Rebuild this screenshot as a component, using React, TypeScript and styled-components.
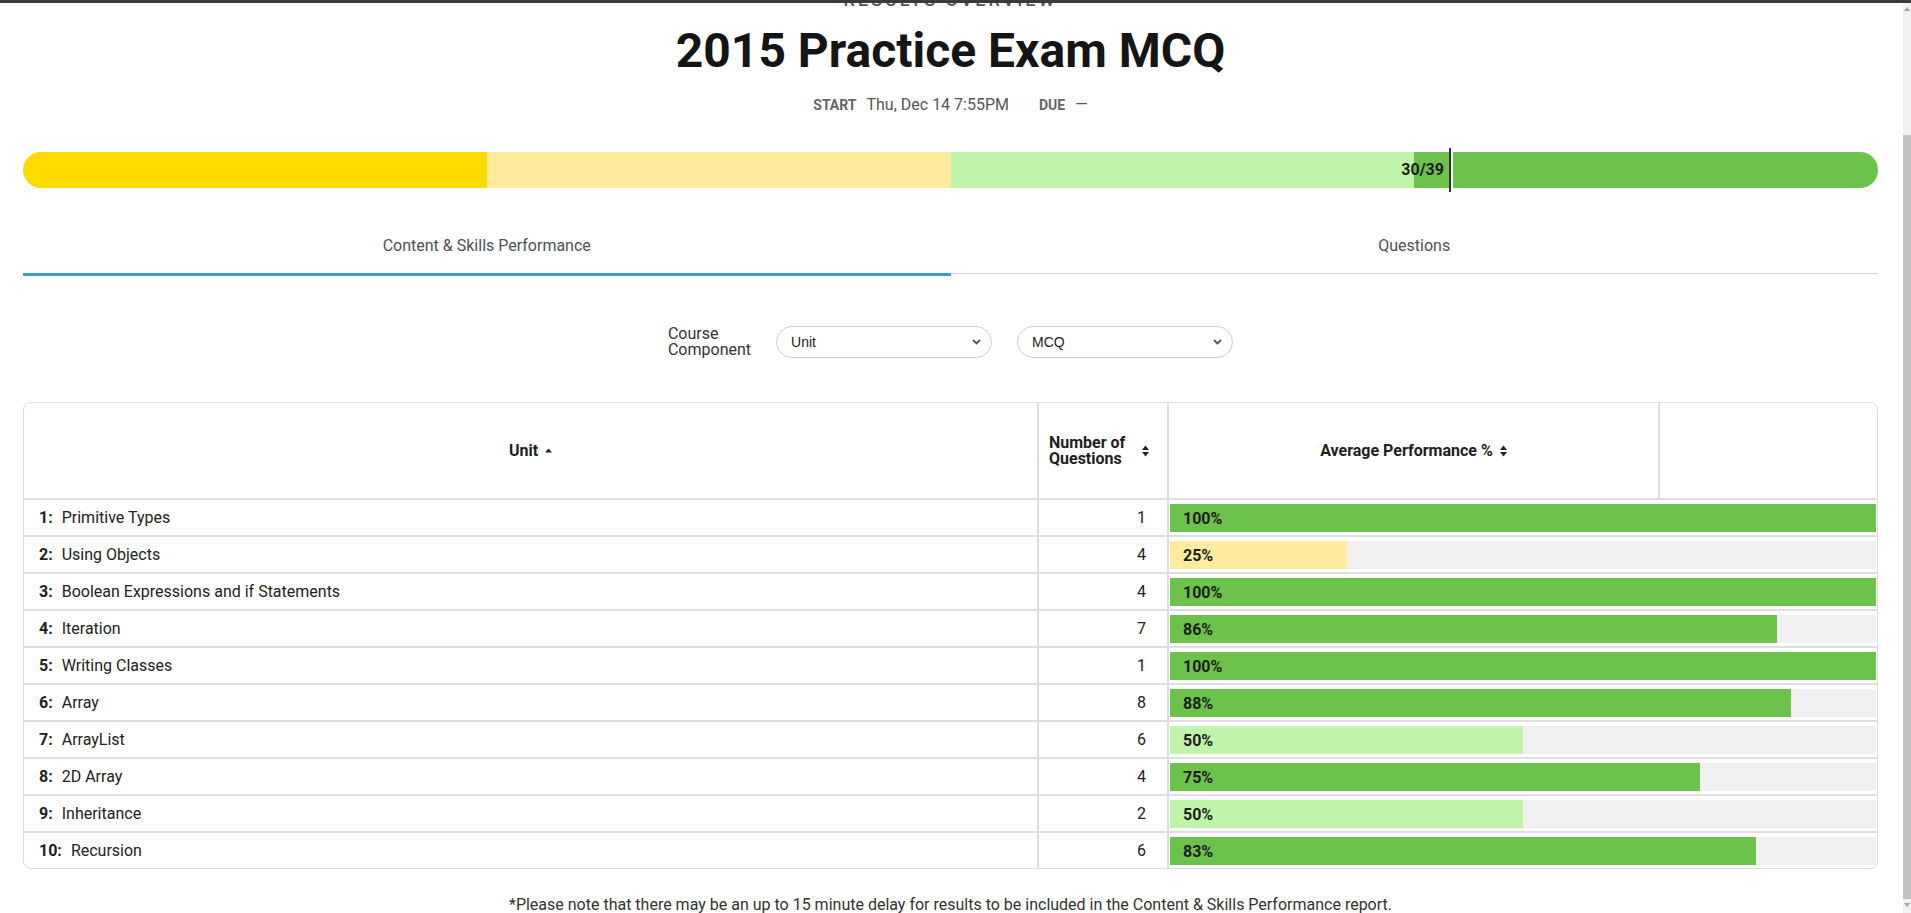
import React from "react";
import styled, { createGlobalStyle } from "styled-components";

interface UnitRow {
  id: number;
  name: string;
  questions: number;
  percent: number;
}

const units: UnitRow[] = [
  { id: 1, name: "Primitive Types", questions: 1, percent: 100 },
  { id: 2, name: "Using Objects", questions: 4, percent: 25 },
  { id: 3, name: "Boolean Expressions and if Statements", questions: 4, percent: 100 },
  { id: 4, name: "Iteration", questions: 7, percent: 86 },
  { id: 5, name: "Writing Classes", questions: 1, percent: 100 },
  { id: 6, name: "Array", questions: 8, percent: 88 },
  { id: 7, name: "ArrayList", questions: 6, percent: 50 },
  { id: 8, name: "2D Array", questions: 4, percent: 75 },
  { id: 9, name: "Inheritance", questions: 2, percent: 50 },
  { id: 10, name: "Recursion", questions: 6, percent: 83 },
];

const scoreColor = (percent: number) => {
  if (percent >= 75) return "#6cc24a";
  if (percent >= 50) return "#c0f4aa";
  if (percent >= 25) return "#feeb9d";
  return "#fddb00";
};

const SortBoth = () => (
  <svg width="7" height="12" viewBox="0 0 7 12">
    <path d="M0 5 L3.5 0.5 L7 5 Z" fill="#222" />
    <path d="M0 7 L3.5 11.5 L7 7 Z" fill="#222" />
  </svg>
);

const SortUp = () => (
  <svg width="7" height="5" viewBox="0 0 7 5">
    <path d="M0 4.5 L3.5 0.5 L7 4.5 Z" fill="#222" />
  </svg>
);

const Chevron = () => (
  <svg width="9" height="6" viewBox="0 0 9 6">
    <path d="M1 1 L4.5 4.5 L8 1" fill="none" stroke="#555" strokeWidth="1.8" />
  </svg>
);

const App = () => {
  const score = 30;
  const total = 39;
  const marker = (score / total) * 100;

  return (
    <>
      <GlobalStyle />
      <TopEdge />
      <ScrollRail>
        <ScrollArrow $up />
        <ScrollThumb />
        <ScrollArrow />
      </ScrollRail>
      <Page>
        <Overline>Results Overview</Overline>
        <Title>2015 Practice Exam MCQ</Title>
        <MetaRow>
          <MetaKey>Start</MetaKey>
          <MetaValue>Thu, Dec 14 7:55PM</MetaValue>
          <MetaKey $gap>Due</MetaKey>
          <MetaValue>—</MetaValue>
        </MetaRow>

        <ScoreBar>
          <ScoreTrack>
            <ScoreSegment $color="#fddb00" />
            <ScoreSegment $color="#feeb9d" />
            <ScoreSegment $color="#c0f4aa" />
            <ScoreSegment $color="#6cc24a" />
          </ScoreTrack>
          <ScoreLabel style={{ right: `calc(${100 - marker}% + 6px)` }}>
            {score}/{total}
          </ScoreLabel>
          <ScoreMarker style={{ left: `${marker}%` }} />
        </ScoreBar>

        <Tabs>
          <Tab $active>Content &amp; Skills Performance</Tab>
          <Tab>Questions</Tab>
        </Tabs>

        <Filters>
          <FilterLabel>
            Course
            <br />
            Component
          </FilterLabel>
          <Dropdown>
            <span>Unit</span>
            <Chevron />
          </Dropdown>
          <Dropdown>
            <span>MCQ</span>
            <Chevron />
          </Dropdown>
        </Filters>

        <TableBox>
          <HeadRow>
            <HeadCell>
              Unit
              <SortUp />
            </HeadCell>
            <CountHead>
              <HeadText>
                Number of
                <br />
                Questions
              </HeadText>
              <SortBoth />
            </CountHead>
            <HeadCell $split>
              Average Performance %
              <SortBoth />
            </HeadCell>
            <HeadCell $split />
          </HeadRow>
          {units.map((u) => (
            <BodyRow key={u.id}>
              <UnitCell>
                <UnitNumber>{u.id}:</UnitNumber>
                {u.name}
              </UnitCell>
              <CountCell>{u.questions}</CountCell>
              <BarCell>
                <BarTrack>
                  <BarFill
                    $color={scoreColor(u.percent)}
                    style={{ width: `${u.percent}%` }}
                  />
                  <BarText>{u.percent}%</BarText>
                </BarTrack>
              </BarCell>
            </BodyRow>
          ))}
        </TableBox>

        <Note>
          *Please note that there may be an up to 15 minute delay for results to
          be included in the Content &amp; Skills Performance report.
        </Note>
      </Page>
    </>
  );
};

export default App;

const GlobalStyle = createGlobalStyle`
  * {
    box-sizing: border-box;
  }

  body {
    margin: 0;
    background: #ffffff;
    color: #222222;
    font-family: Roboto, "Liberation Sans", Arial, sans-serif;
  }
`;

const TopEdge = styled.div`
  position: fixed;
  top: 0;
  left: 0;
  right: 0;
  height: 3px;
  background: #3a3a3a;
  z-index: 10;
`;

const ScrollRail = styled.div`
  position: fixed;
  top: 3px;
  right: 0;
  bottom: 0;
  width: 8px;
  display: flex;
  flex-direction: column;
  align-items: center;
  background: #f1f1f1;
  z-index: 5;
`;

const ScrollArrow = styled.div<{ $up?: boolean }>`
  width: 0;
  height: 0;
  margin: ${(p) => (p.$up ? "4px 0 0" : "4px 0 6px")};
  border-left: 3px solid transparent;
  border-right: 3px solid transparent;
  ${(p) => (p.$up ? "border-bottom: 4px solid #a3a3a3;" : "border-top: 4px solid #a3a3a3;")}
`;

const ScrollThumb = styled.div`
  flex: 1;
  width: 100%;
  margin-top: 124px;
  background: #c1c1c1;
`;

const Page = styled.main`
  display: flex;
  flex-direction: column;
  padding: 0 33px 22px 23px;
  overflow: hidden;
`;

const Overline = styled.div`
  margin-top: -10px;
  text-align: center;
  text-transform: uppercase;
  letter-spacing: 3px;
  font-size: 18px;
  font-weight: 500;
  line-height: 20px;
  color: #555555;
`;

const Title = styled.h1`
  margin: 12px 0 0;
  text-align: center;
  font-size: 48px;
  font-weight: 700;
  line-height: 57px;
  color: #151515;
`;

const MetaRow = styled.div`
  display: flex;
  justify-content: center;
  align-items: baseline;
  margin-top: 16px;
  line-height: 20px;
`;

const MetaKey = styled.span<{ $gap?: boolean }>`
  margin: 0 10px 0 ${(p) => (p.$gap ? "30px" : "0")};
  text-transform: uppercase;
  font-size: 14px;
  font-weight: 700;
  color: #666666;
`;

const MetaValue = styled.span`
  font-size: 16px;
  color: #555555;
`;

const ScoreBar = styled.div`
  position: relative;
  margin-top: 37px;
  height: 36px;
`;

const ScoreTrack = styled.div`
  display: flex;
  height: 100%;
  border-radius: 18px;
  overflow: hidden;
`;

const ScoreSegment = styled.div<{ $color: string }>`
  flex: 1;
  background: ${(p) => p.$color};
`;

const ScoreLabel = styled.span`
  position: absolute;
  top: 0;
  line-height: 36px;
  font-size: 16px;
  font-weight: 700;
  color: #1e1e1e;
`;

const ScoreMarker = styled.div`
  position: absolute;
  top: -4px;
  bottom: -4px;
  width: 2px;
  margin-left: -1px;
  background: #333333;
  box-shadow: 2px 0 0 #ffffff;
`;

const Tabs = styled.div`
  display: flex;
  margin-top: 30px;
`;

const Tab = styled.div<{ $active?: boolean }>`
  flex: 1;
  padding: 18px 0 ${(p) => (p.$active ? "16px" : "17px")};
  text-align: center;
  font-size: 16px;
  line-height: 20px;
  color: #4d5058;
  border-bottom: ${(p) => (p.$active ? "3px solid #3d9ad6" : "1px solid #d6d6d6")};
  margin-bottom: ${(p) => (p.$active ? "0" : "2px")};
`;

const Filters = styled.div`
  display: flex;
  justify-content: center;
  align-items: center;
  gap: 25px;
  margin-top: 50px;
`;

const FilterLabel = styled.div`
  font-size: 16px;
  line-height: 16px;
  color: #333333;
`;

const Dropdown = styled.div`
  display: flex;
  align-items: center;
  justify-content: space-between;
  width: 216px;
  height: 32px;
  padding: 0 10px 0 14px;
  border: 1px solid #cfcfcf;
  border-radius: 16px;
  font-family: "Liberation Sans", Arial, sans-serif;
  font-size: 14px;
  color: #222222;
`;

const TableBox = styled.div`
  margin-top: 44px;
  border: 1px solid #dddddd;
  border-radius: 8px;
  overflow: hidden;
`;

const HeadRow = styled.div`
  display: grid;
  grid-template-columns: 1013px 130px 491px 1fr;
  height: 95px;
`;

const HeadCell = styled.div<{ $split?: boolean }>`
  display: flex;
  align-items: center;
  justify-content: center;
  gap: 7px;
  border-left: ${(p) => (p.$split ? "2px solid #dedede" : "0")};
  font-size: 16px;
  font-weight: 700;
  color: #1e1e1e;
`;

const CountHead = styled(HeadCell)`
  justify-content: space-between;
  padding: 0 18px 0 10px;
  border-left: 2px solid #dedede;
`;

const HeadText = styled.span`
  line-height: 16px;
`;

const BodyRow = styled.div`
  display: grid;
  grid-template-columns: 1013px 130px 1fr;
  height: 37px;
  border-top: 2px solid #dedede;
`;

const UnitCell = styled.div`
  display: flex;
  align-items: center;
  padding-left: 15px;
  font-size: 16px;
  color: #222222;
`;

const UnitNumber = styled.span`
  margin-right: 9px;
  font-weight: 700;
`;

const CountCell = styled.div`
  display: flex;
  align-items: center;
  justify-content: flex-end;
  padding-right: 21px;
  border-left: 2px solid #dedede;
  font-size: 16px;
  color: #222222;
`;

const BarCell = styled.div`
  padding: 4px 1px 3px;
  border-left: 2px solid #dedede;
`;

const BarTrack = styled.div`
  position: relative;
  display: flex;
  align-items: center;
  height: 100%;
  background: #f0f0f0;
`;

const BarFill = styled.div<{ $color: string }>`
  position: absolute;
  top: 0;
  bottom: 0;
  left: 0;
  background: ${(p) => p.$color};
`;

const BarText = styled.span`
  position: relative;
  padding-left: 13px;
  font-size: 16px;
  font-weight: 700;
  color: #1e1e1e;
`;

const Note = styled.p`
  margin: 26px 0 0;
  text-align: center;
  font-size: 16px;
  line-height: 20px;
  color: #333333;
`;
